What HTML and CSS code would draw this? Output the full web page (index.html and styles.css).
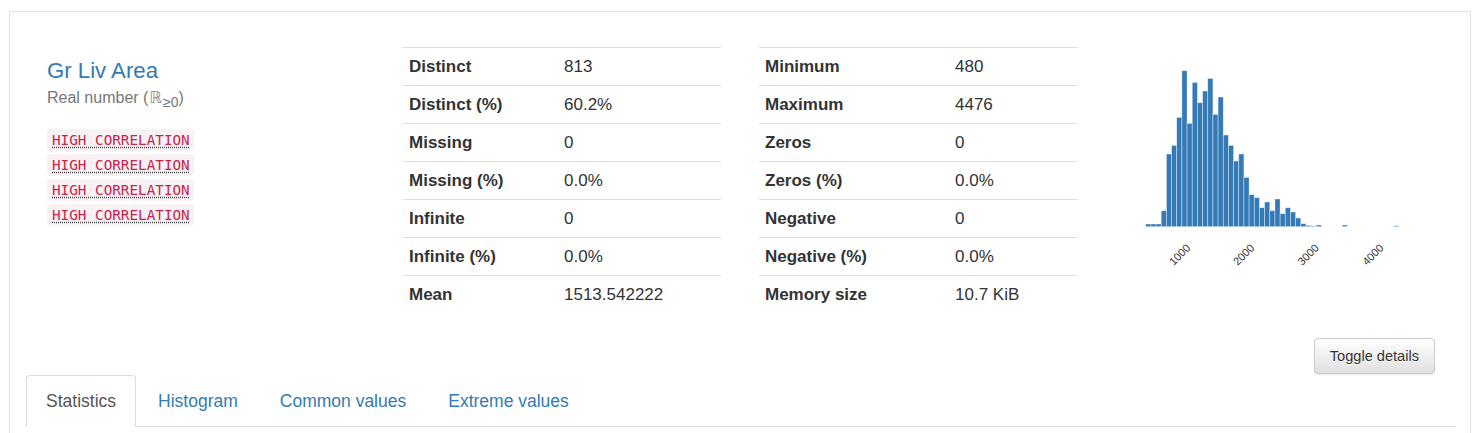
FILE: index.html
```html
<!DOCTYPE html>
<html lang="en">
<head>
<meta charset="utf-8">
<title>Gr Liv Area</title>
<link rel="stylesheet" href="styles.css">
</head>
<body>
<div class="panel">
  <div class="item">
    <div class="overview">
      <div class="col col-name">
        <p class="var-name">Gr Liv Area</p>
        <p class="var-type">Real number (<span class="set">ℝ</span><sub>≥0</sub>)</p>
        <div class="alerts">
          <code class="alert-badge"><abbr title="This variable is highly correlated with others">HIGH CORRELATION</abbr></code>
          <code class="alert-badge"><abbr title="This variable is highly correlated with others">HIGH CORRELATION</abbr></code>
          <code class="alert-badge"><abbr title="This variable is highly correlated with others">HIGH CORRELATION</abbr></code>
          <code class="alert-badge"><abbr title="This variable is highly correlated with others">HIGH CORRELATION</abbr></code>
        </div>
      </div>
      <div class="col">
        <table class="stats stats-a">
          <tr><th>Distinct</th><td>813</td></tr>
          <tr><th>Distinct (%)</th><td>60.2%</td></tr>
          <tr><th>Missing</th><td>0</td></tr>
          <tr><th>Missing (%)</th><td>0.0%</td></tr>
          <tr><th>Infinite</th><td>0</td></tr>
          <tr><th>Infinite (%)</th><td>0.0%</td></tr>
          <tr><th>Mean</th><td>1513.542222</td></tr>
        </table>
      </div>
      <div class="col">
        <table class="stats stats-b">
          <tr><th>Minimum</th><td>480</td></tr>
          <tr><th>Maximum</th><td>4476</td></tr>
          <tr><th>Zeros</th><td>0</td></tr>
          <tr><th>Zeros (%)</th><td>0.0%</td></tr>
          <tr><th>Negative</th><td>0</td></tr>
          <tr><th>Negative (%)</th><td>0.0%</td></tr>
          <tr><th>Memory size</th><td>10.7 KiB</td></tr>
        </table>
      </div>
      <div class="col col-hist">
        <svg class="hist" width="341" height="240" viewBox="0 0 341 240" aria-label="Histogram of Gr Liv Area">
          <g class="bars">
            <rect x="30.7" y="177" width="5.17" height="2.7"/>
            <rect x="35.87" y="177" width="5.17" height="2.7"/>
            <rect x="41.04" y="177" width="5.17" height="2.7"/>
            <rect x="46.21" y="163.7" width="5.17" height="16"/>
            <rect x="51.38" y="107" width="5.17" height="72.7"/>
            <rect x="56.55" y="98.4" width="5.17" height="81.3"/>
            <rect x="61.72" y="70.4" width="5.17" height="109.3"/>
            <rect x="66.89" y="23.7" width="5.17" height="156"/>
            <rect x="72.06" y="76.4" width="5.17" height="103.3"/>
            <rect x="77.23" y="35.4" width="5.17" height="144.3"/>
            <rect x="82.4" y="55.7" width="5.17" height="124"/>
            <rect x="87.57" y="44" width="5.17" height="135.7"/>
            <rect x="92.74" y="31.4" width="5.17" height="148.3"/>
            <rect x="97.91" y="67.4" width="5.17" height="112.3"/>
            <rect x="103.08" y="50" width="5.17" height="129.7"/>
            <rect x="108.25" y="88" width="5.17" height="91.7"/>
            <rect x="113.42" y="98.4" width="5.17" height="81.3"/>
            <rect x="118.59" y="114" width="5.17" height="65.7"/>
            <rect x="123.76" y="107" width="5.17" height="72.7"/>
            <rect x="128.93" y="130.4" width="5.17" height="49.3"/>
            <rect x="134.1" y="147.7" width="5.17" height="32"/>
            <rect x="139.27" y="150.7" width="5.17" height="29"/>
            <rect x="144.44" y="160.7" width="5.17" height="19"/>
            <rect x="149.61" y="155" width="5.17" height="24.7"/>
            <rect x="154.78" y="163.7" width="5.17" height="16"/>
            <rect x="159.95" y="152" width="5.17" height="27.7"/>
            <rect x="165.12" y="166.7" width="5.17" height="13"/>
            <rect x="170.29" y="160.7" width="5.17" height="19"/>
            <rect x="175.46" y="165" width="5.17" height="14.7"/>
            <rect x="180.63" y="171" width="5.17" height="8.7"/>
            <rect x="185.8" y="176.7" width="5.17" height="3"/>
            <rect x="190.97" y="178.4" width="5.17" height="1.3"/>
            <rect x="196.14" y="179" width="5.17" height="0.7"/>
            <rect x="201.31" y="178" width="5.17" height="1.7"/>
            <rect x="227.16" y="178" width="5.17" height="1.7"/>
            <rect x="278.86" y="178.7" width="5.17" height="1"/>
          </g>
          <g class="ticks">
            <text x="64.5" y="207.5" transform="rotate(-45 64.5 207.5)">1000</text>
            <text x="128.5" y="207.5" transform="rotate(-45 128.5 207.5)">2000</text>
            <text x="193" y="207.5" transform="rotate(-45 193 207.5)">3000</text>
            <text x="257.8" y="207.5" transform="rotate(-45 257.8 207.5)">4000</text>
          </g>
        </svg>
      </div>
    </div>
    <div class="actions">
      <button class="btn-toggle" type="button">Toggle details</button>
    </div>
    <ul class="tabs">
      <li class="tab active"><a href="#stats">Statistics</a></li>
      <li class="tab"><a href="#hist">Histogram</a></li>
      <li class="tab"><a href="#common">Common values</a></li>
      <li class="tab"><a href="#extreme">Extreme values</a></li>
    </ul>
  </div>
</div>
</body>
</html>
```
FILE: styles.css
```css
* { box-sizing: border-box; }

html, body {
  margin: 0;
  padding: 0;
  background: #fff;
}

body {
  font-family: "Liberation Sans", Arial, Helvetica, sans-serif;
  color: #333;
  overflow: hidden;
  height: 433px;
}

.panel {
  margin: 0 5px 0 9px;
  border-left: 1px solid #e2e2e2;
  border-right: 1px solid #e2e2e2;
  height: 433px;
}

.item {
  margin-top: 11px;
  border-top: 1px solid #e2e2e2;
}

.overview {
  display: grid;
  grid-template-columns: 356px 356px 356px 1fr;
  padding: 35px 0 0 22px;
}

.col {
  padding-left: 15px;
}

.col-name {
  padding-top: 12px;
}

.var-name {
  margin: 0 0 5px;
  font-size: 22.2px;
  line-height: 24px;
  color: #337ab7;
}

.var-type {
  margin: 0;
  font-size: 16px;
  line-height: 20px;
  color: #777;
}

.var-type .set {
  font-family: "DejaVu Sans", sans-serif;
  font-size: 16px;
  color: #8a8a8a;
  margin: 0 1px;
}

.var-type sub {
  font-size: 14px;
  line-height: 0;
  vertical-align: -4px;
}

.alerts {
  margin-top: 21px;
  display: flex;
  flex-direction: column;
  align-items: flex-start;
  gap: 3px;
}

.alert-badge {
  display: inline-block;
  font-family: "DejaVu Sans Mono", "Liberation Mono", monospace;
  font-size: 14.3px;
  line-height: 18px;
  padding: 2px 4px 2px 5px;
  color: #c7254e;
  background: #f9f2f4;
  border-radius: 4px;
}

.alert-badge abbr {
  text-decoration: underline dotted;
  text-decoration-color: #444;
  text-underline-offset: 2px;
  cursor: help;
}

.stats {
  width: 318px;
  border-collapse: collapse;
  font-size: 17px;
  line-height: 24px;
}

.stats th,
.stats td {
  padding: 7px 6px 6px;
  border-top: 1px solid #dddddd;
  text-align: left;
  vertical-align: top;
  white-space: nowrap;
}

.stats th {
  font-weight: bold;
  color: #333;
}

.stats-a th { width: 155px; }
.stats-b th { width: 190px; }

.hist {
  display: block;
}

.bars rect {
  fill: #337ab7;
  stroke: #ffffff;
  stroke-opacity: 0.55;
  stroke-width: 0.7;
}

.ticks text {
  font-family: "Liberation Sans", Arial, sans-serif;
  font-size: 11px;
  fill: #333;
  text-anchor: middle;
  dominant-baseline: central;
}

.actions {
  display: flex;
  justify-content: flex-end;
  padding: 25px 35px 0 0;
}

.btn-toggle {
  font-family: "Liberation Sans", Arial, sans-serif;
  font-size: 14.6px;
  line-height: 20px;
  height: 36px;
  padding: 7px 15px;
  color: #333;
  background-image: linear-gradient(to bottom, #ffffff 0%, #e0e0e0 100%);
  border: 1px solid #ccc;
  border-radius: 4px;
  text-shadow: 0 1px 0 #fff;
  box-shadow: inset 0 1px 0 rgba(255,255,255,.15), 0 1px 1px rgba(0,0,0,.075);
  cursor: pointer;
}

.tabs {
  list-style: none;
  margin: 1px 14px 0 16px;
  padding: 0;
  display: flex;
  border-bottom: 1px solid #dddddd;
}

.tab {
  margin: 0 2px -1px 0;
}

.tab a {
  display: block;
  font-size: 17.5px;
  line-height: 24px;
  padding: 13px 19px;
  color: #337ab7;
  text-decoration: none;
  border: 1px solid transparent;
  border-radius: 4px 4px 0 0;
}

.tab.active a {
  color: #555;
  background: #fff;
  border-color: #dddddd #dddddd transparent;
}
```
